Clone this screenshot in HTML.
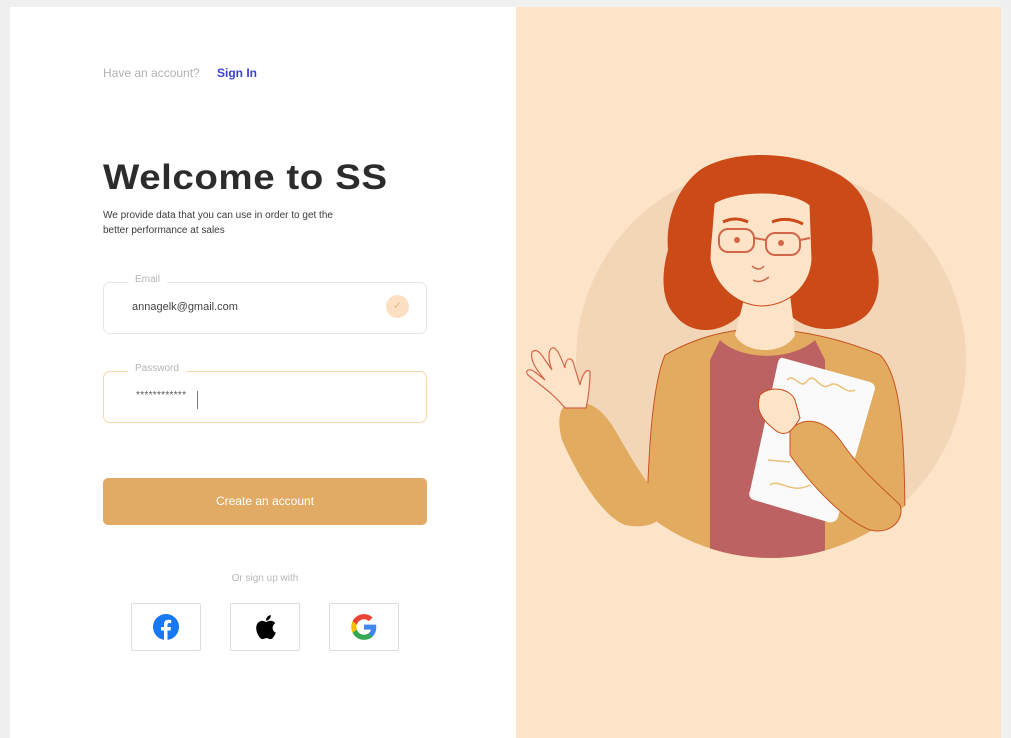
<!DOCTYPE html>
<html><head><meta charset="utf-8"><style>
*{margin:0;padding:0;box-sizing:border-box}
body{width:1011px;height:738px;background:#f0f0f0;position:relative;overflow:hidden;font-family:"Liberation Sans",sans-serif}
.card{position:absolute;left:10px;top:7px;width:506px;height:731px;background:#fff}
.right{position:absolute;left:516px;top:7px;width:485px;height:731px;background:#fde4c8}
.abs{position:absolute}
.field{position:absolute;left:103px;width:324px;height:52px;border:1.5px solid #e6e6e6;border-radius:7px;background:#fff}
.lbl{position:absolute;top:-9px;left:24px;background:#fff;padding:0 7px;font-size:10px;color:#b5b5b5}
.soc{position:absolute;top:603px;width:70px;height:48px;border:1px solid #dedede;border-radius:2px;display:flex;align-items:center;justify-content:center}
</style></head><body>
<div class="card"></div>
<div class="right"></div>
<div class="abs" style="left:103px;top:66px;font-size:12px;color:#b2b2b2">Have an account?</div>
<div class="abs" style="left:217px;top:66px;font-size:12px;color:#3b3fd8;font-weight:bold">Sign In</div>
<div class="abs" style="left:103px;top:158px;font-size:35px;font-weight:bold;color:#2c2c2c;letter-spacing:0.5px;transform:scaleX(1.1);transform-origin:left">Welcome to SS</div>
<div class="abs" style="left:103px;top:208px;font-size:10px;line-height:15px;color:#3a3a3a">We provide data that you can use in order to get the<br>better performance at sales</div>
<div class="field" style="top:282px"><span class="lbl">Email</span>
<div class="abs" style="left:28px;top:18px;font-size:11px;color:#444">annagelk@gmail.com</div>
<div class="abs" style="left:282px;top:12px;width:23px;height:23px;border-radius:50%;background:#fde0c4;color:#e3b584;font-size:11px;text-align:center;line-height:23px">✓</div></div>
<div class="field" style="top:371px;border-color:#f6d6ab"><span class="lbl">Password</span>
<div class="abs" style="left:32px;top:18px;font-size:10px;color:#555;letter-spacing:0.3px">************</div>
<div class="abs" style="left:93px;top:19px;width:1px;height:18px;background:#777"></div></div>
<div class="abs" style="left:103px;top:478px;width:324px;height:47px;border-radius:5px;background:#e2ab65;color:#fff;font-size:12px;text-align:center;line-height:47px">Create an account</div>
<div class="abs" style="left:103px;top:573px;width:324px;text-align:center;font-size:10px;color:#b8b8b8">Or sign up with</div>
<div class="soc" style="left:131px"><svg width="28" height="28" viewBox="0 0 28 28"><circle cx="14" cy="14" r="13" fill="#1877f2"/><path d="M15.5 27V17.5h3l.5-3.5h-3.5v-2.2c0-1 .3-1.7 1.8-1.7h1.9V7c-.4 0-1.5-.2-2.7-.2-2.7 0-4.5 1.6-4.5 4.6V14H9v3.5h3V27z" fill="#fff"/></svg></div>
<div class="soc" style="left:230px"><svg width="24" height="28" viewBox="0 0 24 28"><path d="M19.6 14.8c0-3 2.5-4.5 2.6-4.6-1.4-2.1-3.6-2.4-4.4-2.4-1.9-.2-3.6 1.1-4.6 1.1-1 0-2.4-1.1-4-1-2 0-3.9 1.2-5 3-2.1 3.700-.5 9.200 1.600 12.200 1 1.500 2.200 3.100 3.800 3 1.500-.1 2.100-1 3.900-1 1.800 0 2.300 1 3.900 1 1.600 0 2.700-1.500 3.700-3 1.200-1.700 1.600-3.300 1.700-3.400-.1 0-3.200-1.200-3.200-4.900zM16.600 5.900c.8-1 1.400-2.400 1.200-3.800-1.200.1-2.700.8-3.500 1.800-.8.900-1.500 2.300-1.300 3.700 1.300.1 2.700-.7 3.600-1.700z" fill="#000"/></svg></div>
<div class="soc" style="left:329px"><svg width="28" height="28" viewBox="0 0 48 48"><path fill="#4285F4" d="M45 24.5c0-1.600-.1-3.100-.4-4.500H24v8.500h11.800c-.5 2.700-2.100 5-4.400 6.600v5.500h7.100C42.600 36.700 45 31.100 45 24.500z"/><path fill="#34A853" d="M24 46c5.900 0 10.900-2 14.500-5.300l-7.100-5.500c-2 1.300-4.500 2.100-7.400 2.100-5.700 0-10.600-3.900-12.300-9.100H4.400v5.700C8 41.100 15.400 46 24 46z"/><path fill="#FBBC05" d="M11.700 28.200c-.4-1.300-.7-2.700-.7-4.200s.3-2.900.7-4.200v-5.700H4.400C2.900 17.100 2 20.400 2 24s.9 6.900 2.400 9.900z"/><path fill="#EA4335" d="M24 10.700c3.200 0 6.100 1.100 8.400 3.300l6.300-6.300C34.900 4.200 29.900 2 24 2 15.400 2 8 6.900 4.400 14.100l7.300 5.700c1.700-5.200 6.600-9.100 12.300-9.100z"/></svg></div>

<svg class="abs" style="left:0;top:0" width="1011" height="738" viewBox="0 0 1011 738">
<defs><clipPath id="c"><circle cx="771" cy="360" r="198"/></clipPath></defs>
<circle cx="771" cy="360" r="195" fill="#f3d6b8"/>
<!-- hair back -->
<path d="M700 170 C730 150 790 150 830 170 C865 185 875 215 872 250 C885 280 878 310 860 320 C835 335 805 330 790 315 L740 315 C720 335 690 335 675 315 C660 300 662 270 668 250 C665 215 680 185 700 170Z" fill="#cb4a17"/>
<g clip-path="url(#c)">
<path d="M665 355 C700 335 730 330 760 328 C800 330 840 338 880 355 C905 380 905 460 905 560 L645 560 C648 470 650 390 665 355Z" fill="#e2ab60" stroke="#c8531f" stroke-width="1"/>
<path d="M720 340 C740 360 790 362 815 340 L825 360 L825 560 L710 560 L710 360Z" fill="#bd6262"/>
<path d="M745 295 L790 295 L795 335 C785 355 745 355 735 335Z" fill="#fde4c8"/>
</g>
<path d="M712 205 C730 190 790 188 810 205 L812 260 C810 285 790 305 762 306 C735 305 715 285 710 260Z" fill="#fde4c8" stroke="#cb4a17" stroke-width="1"/>
<path d="M705 170 C740 150 800 150 830 180 C815 190 795 190 780 195 C760 190 735 190 715 200 C712 230 712 260 705 265 C690 250 688 200 705 170Z" fill="#cb4a17"/>
<path d="M723 222 Q735 216 748 222 M772 222 Q787 216 803 224" stroke="#cb4a17" stroke-width="3" fill="none"/>
<rect x="719" y="229" width="35" height="23" rx="9" fill="none" stroke="#d4664a" stroke-width="2"/>
<rect x="766" y="233" width="34" height="22" rx="9" fill="none" stroke="#d4664a" stroke-width="2"/>
<path d="M754 238 L766 240 M800 240 L810 238" stroke="#d4664a" stroke-width="2"/>
<circle cx="737" cy="240" r="3" fill="#d4664a"/><circle cx="781" cy="243" r="3" fill="#d4664a"/>
<path d="M752 266 Q759 272 764 266 M753 280 Q760 284 769 277" stroke="#cb6a4a" stroke-width="1.5" fill="none"/>
<path d="M783 358 L870 382 C875 384 876 388 874 392 L838 517 C836 522 832 523 828 522 L754 500 C750 499 748 495 750 491 L778 362 C779 359 781 357 783 358Z" fill="#fafafa"/>
<path d="M787 380 C795 372 800 392 808 380 C815 372 820 392 830 385 C838 380 845 395 855 390" stroke="#ebc07a" stroke-width="1.5" fill="none"/>
<path d="M768 460 L790 462 M770 485 C780 478 790 495 810 485" stroke="#ebc07a" stroke-width="1.5" fill="none"/>
<path d="M790 430 C805 415 825 420 840 440 C860 470 885 490 900 505 C905 520 890 535 870 530 C845 520 815 490 790 455Z" fill="#e2ab60" stroke="#c8531f" stroke-width="1"/>
<path d="M760 395 C770 385 790 388 795 400 L800 418 C792 432 785 438 775 430 C762 420 755 410 760 395Z" fill="#fde4c8" stroke="#cb4a17" stroke-width="1"/>
<path d="M565 405 C585 398 600 405 615 430 C635 465 650 490 668 505 C665 520 650 530 625 525 C600 515 575 470 562 440 C558 425 558 412 565 405Z" fill="#e2ab60"/>
<path d="M565 408 C555 395 540 385 528 375 C524 370 530 368 535 372 L545 380 C535 368 530 360 532 352 C536 348 540 352 545 360 L552 370 C548 360 548 350 552 348 C556 346 560 355 565 368 C565 358 572 355 574 365 L580 385 C582 375 587 367 590 372 C590 385 588 400 586 408Z" fill="#fde4c8" stroke="#d4664a" stroke-width="1.2"/>
</svg>
</body></html>
